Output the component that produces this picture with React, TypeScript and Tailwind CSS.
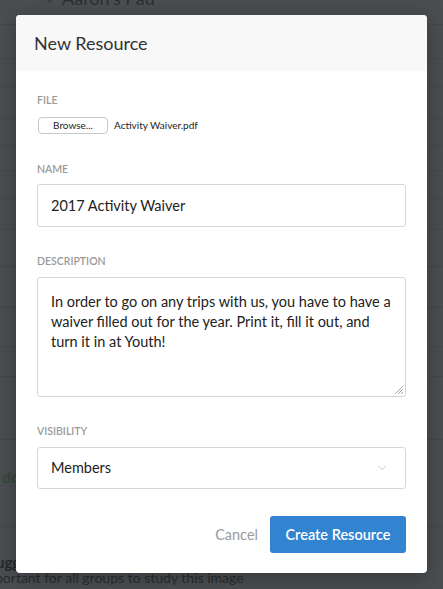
import { ChevronDown } from "lucide-react";

const font = { fontFamily: "Lato, 'Open Sans', sans-serif" };

const Label = ({ children }: { children: string }) => (
  <div className="text-[10.5px] font-semibold uppercase leading-none text-[#9a9a9a]">
    {children}
  </div>
);

export default function App() {
  return (
    <div
      style={font}
      className="relative w-[443px] h-[589px] overflow-hidden bg-[#4b4e51]"
    >
      {/* page behind the overlay */}
      <div className="flex flex-col">
        <div className="h-[25px] border-b border-[#43464a] flex items-start pl-[44px] gap-[6px] text-[18px] leading-[18px] text-[#2c2e31]">
          <ChevronDown size={12} strokeWidth={2} className="-mt-[5px]" />
          <span className="-mt-[11px]">Aaron's Pad</span>
        </div>
        <div className="h-[34px] border-b border-[#45484b]" />
        <div className="h-[28px] border-b border-[#45484b]" />
        <div className="h-[32px] border-b border-[#45484b]" />
        <div className="h-[27px] border-b border-[#45484b]" />
        <div className="h-[25px] border-b border-[#45484b]" />
        <div className="h-[28px] border-b border-[#45484b]" />
        <div className="h-[31px] border-b border-[#45484b]" />
        <div className="h-[37px] border-b border-[#43464a]" />
        <div className="h-[41px] border-b border-[#43464a]" />
        <div className="h-[39px] border-b border-[#45484b]" />
        <div className="h-[30px] border-b border-[#45484b]" />
        <div className="h-[63px] border-b border-[#43464a]" />
        <div className="h-[87px] border-b border-[#43464a] pt-[28px] pl-[2px] text-[16px] leading-[18px] font-bold text-[#34483b]">
          dd
        </div>
        <div className="h-[42px] flex items-end text-[15px] leading-[14px] font-bold text-[#26282a] -ml-[4px]">
          ugg
        </div>
        <div className="mt-[2px] text-[14px] leading-[14px] text-[#2a2c2e] -ml-[5px]">
          portant for all groups to study this image
        </div>
      </div>

      {/* modal */}
      <div className="absolute left-[16px] top-[15px] w-[411px] h-[558px] rounded-[4px] bg-white shadow-[0_4px_20px_rgba(0,0,0,0.3)] overflow-hidden flex flex-col">
        <div className="h-[56px] bg-[#f8f8f8] flex items-center px-[18px] text-[18px] text-[#333]">
          New Resource
        </div>
        <div className="flex flex-col px-[21px] pt-[24px]">
          <Label>File</Label>
          <div className="mt-[11px] flex items-center gap-[6px] text-[10px] text-[#222]">
            <div className="ml-[1px] w-[70px] h-[17px] rounded-[4px] border border-[#c8c8c8] bg-white flex items-center justify-center">
              Browse...
            </div>
            <span>Activity Waiver.pdf</span>
          </div>

          <div className="mt-[30px]">
            <Label>Name</Label>
          </div>
          <div className="mt-[10px] h-[43px] rounded-[3px] border border-[#d6d6d6] flex items-center px-[13px] text-[14.5px] text-[#222]">
            2017 Activity Waiver
          </div>

          <div className="mt-[29px]">
            <Label>Description</Label>
          </div>
          <div className="relative mt-[10px] h-[120px] rounded-[3px] border border-[#d6d6d6] px-[13px] pt-[14px] text-[14.5px] leading-[20px] text-[#222]">
            In order to go on any trips with us, you have to have a waiver filled out for the year. Print it, fill it out, and turn it in at Youth!
            <svg
              className="absolute right-[1px] bottom-[1px]"
              width="11"
              height="11"
              viewBox="0 0 11 11"
            >
              <path d="M10 2 L2 10 M10 5 L5 10 M10 8 L8 10" stroke="#aaa" strokeWidth="1" />
            </svg>
          </div>

          <div className="mt-[29px]">
            <Label>Visibility</Label>
          </div>
          <div className="mt-[11px] h-[42px] rounded-[3px] border border-[#d6d6d6] flex items-center justify-between pl-[13px] pr-[16px] text-[14.5px] text-[#222]">
            <span>Members</span>
            <ChevronDown size={14} strokeWidth={1.25} className="text-[#b5b5b5]" />
          </div>

          <div className="mt-[27px] flex items-center justify-end gap-[12px]">
            <span className="text-[14.5px] text-[#9b9b9b]">Cancel</span>
            <div className="h-[37px] w-[136px] rounded-[3px] bg-[#3283d0] flex items-center justify-center text-[14.5px] font-semibold text-white">
              Create Resource
            </div>
          </div>
        </div>
      </div>
    </div>
  );
}
